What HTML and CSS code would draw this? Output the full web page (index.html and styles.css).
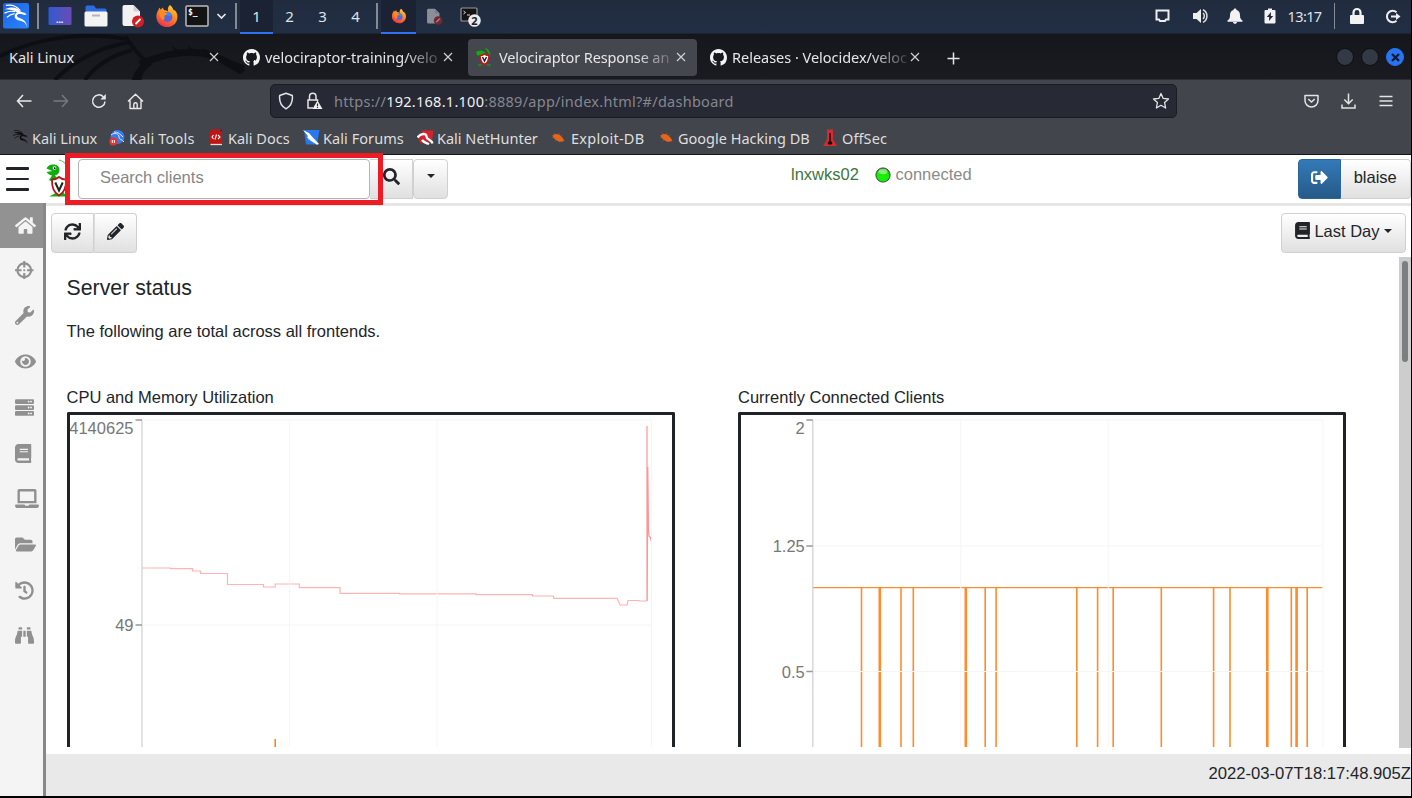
FILE: index.html
```html
<!DOCTYPE html>
<html lang="en">
<head>
<meta charset="utf-8">
<title>Velociraptor Response and Monitoring</title>
<link rel="stylesheet" href="styles.css">
</head>
<body>
<svg class="defs" width="0" height="0">
  <defs>
    <linearGradient id="gKali" x1="0" y1="0" x2="1" y2="1"><stop offset="0" stop-color="#1a62e0"/><stop offset="1" stop-color="#2a86ff"/></linearGradient>
    <linearGradient id="gDesk" x1="0" y1="0" x2="1" y2="0"><stop offset="0" stop-color="#2f5bd0"/><stop offset="1" stop-color="#6c4bb4"/></linearGradient>
    <linearGradient id="gFox" x1="0.8" y1="0" x2="0.3" y2="1"><stop offset="0" stop-color="#ffd43a"/><stop offset="0.45" stop-color="#ff8a1e"/><stop offset="1" stop-color="#ee2f4e"/></linearGradient>
    <radialGradient id="gDot" cx="0.45" cy="0.7" r="0.7"><stop offset="0" stop-color="#12f500"/><stop offset="0.7" stop-color="#18ea04"/><stop offset="1" stop-color="#1a7d10"/></radialGradient>
    <symbol id="firefox" viewBox="0 0 24 24">
      <path fill="url(#gFox)" d="M15 1c2 1.500 3 3.500 3.600 5.200 1-.200 1.600.300 2.200 1.300 1.400 2 2 4.500 1.500 7.200C21.300 19.900 17.200 23 12.200 23 6.300 23 1.600 18.600 1.400 12.900c-.100-3.500 1-5.600 2.200-7.200.100-.900.500-1.500 1-2 .300.800.700 1.500 1.300 2 .500-1 1.200-1.700 2.100-2.200 0 1 .300 1.800 1 2.400 1.800.100 3.200.600 4.100 1.500C12.500 5 13 2.600 15 1z"/>
      <circle cx="12.300" cy="13" r="5" fill="#5a62dc"/>
      <path fill="#3b8cf5" d="M9 9c2-1.500 5-1 6.500.500l1 3-4-1z"/>
      <path fill="#ff8b20" d="M4.500 7.500c2-.800 4-.300 5.400 1l2.400.700c-.300 1.500-1.500 1.800-2.900 2.300 0 1.300.5 2.400-.600 4.500-3-.5-5-4.500-4.300-8.500z"/>
    </symbol>
    <symbol id="docno" viewBox="0 0 24 24">
      <path fill="#f2f2f2" d="M1.500 3a2 2 0 0 1 2-2h9L19 7.500V20a2 2 0 0 1-2 2H3.500a2 2 0 0 1-2-2z"/>
      <path fill="#cfcfcf" d="M12.500 1v5a1.500 1.500 0 0 0 1.500 1.500h5z"/>
      <circle cx="17" cy="17.500" r="6" fill="#cf1f24"/>
      <path d="M14.500 20l5-5" stroke="#fff" stroke-width="1.800"/>
    </symbol>
    <symbol id="kdragon" viewBox="0 0 27 27">
      <path fill="currentColor" d="M2 6.500C8 3.500 15 4 18.500 9l4.500 1.500 1.500 2-3-.3-2.500-.7c-2.500-.5-4.500 0-4.500 1.800 0 3.200 9.500 1.500 10.500 11.500-2-6.500-6-6-9.500-7-4-1.200-4.500-6-1-8C11 7.200 6.500 6.500 2 6.500z"/>
      <path fill="none" stroke="currentColor" stroke-width="1.200" d="M3 2.500C8 1.500 14 3 18 8M1.500 10.500c4-2 7-2.500 11-1.500M4 15c2.500-2.500 5-3.700 8-4"/>
    </symbol>
    <symbol id="github" viewBox="0 0 16 16"><path fill="#f4f4f4" d="M8 0C3.580 0 0 3.580 0 8c0 3.540 2.290 6.530 5.470 7.590.4.070.55-.17.55-.38 0-.19-.01-.82-.01-1.490-2.010.37-2.530-.49-2.690-.94-.09-.23-.48-.94-.82-1.130-.28-.15-.68-.52-.01-.53.63-.01 1.080.58 1.230.82.72 1.210 1.870.87 2.330.66.07-.52.28-.87.51-1.070-1.780-.2-3.640-.89-3.640-3.950 0-.87.31-1.590.82-2.150-.08-.2-.36-1.020.08-2.120 0 0 .67-.21 2.200.82.64-.18 1.320-.27 2-.27s1.360.09 2 .27c1.530-1.040 2.200-.82 2.200-.82.44 1.100.16 1.920.08 2.120.51.56.82 1.270.82 2.150 0 3.070-1.870 3.750-3.650 3.950.29.25.54.73.54 1.480 0 1.070-.01 1.930-.01 2.200 0 .21.15.46.55.38A8.010 8.010 0 0 0 16 8c0-4.420-3.580-8-8-8z"/></symbol>
    <symbol id="close" viewBox="0 0 10 10"><path d="M1 1l8 8M9 1L1 9" stroke="#d0d0d0" stroke-width="1.200"/></symbol>
    <symbol id="raptor" viewBox="0 0 24 40">
      <path fill="none" stroke="#4fca4f" stroke-width="1.200" d="M13 1c5 1 9 5 8.500 12-.300 3-1 4-2.500 6"/>
      <path fill="#0fae0f" d="M.500 9.500C2 6.500 4.500 5 7.500 5.500c3.500 0 6 2.200 6 5.500 0 3-1.700 4.500-4.500 5.500l3 4-6 2-3-1.500 3-4.500C3.500 16 1.500 15 .700 13l5.500-1z"/>
      <path fill="#0fae0f" d="M3 37.500l6-3 2-4h5l2 4 5 3z"/>
      <circle cx="8.500" cy="9" r="1.800" fill="#fff"/><circle cx="8.700" cy="9.200" r=".9" fill="#000"/>
      <path fill="#fff" stroke="#b81414" stroke-width="1.800" d="M13 18c-2 1.800-4.500 2.600-7 2.600-.300 7 1 12.400 7 16 6-3.600 7.300-9 7-16-2.500 0-5-.800-7-2.600z"/>
      <path fill="none" stroke="#222" stroke-width="2" d="M9.300 23.500L13 31.500l3.700-8"/>
    </symbol>
    <symbol id="book" viewBox="0 0 448 512"><path d="M448 360V24c0-13.300-10.700-24-24-24H96C43 0 0 43 0 96v320c0 53 43 96 96 96h328c13.300 0 24-10.700 24-24v-16c0-7.500-3.500-14.300-8.900-18.700-4.200-15.400-4.200-59.300 0-74.700 5.400-4.300 8.900-11.100 8.900-18.600zM128 134c0-3.300 2.700-6 6-6h212c3.300 0 6 2.700 6 6v20c0 3.300-2.700 6-6 6H134c-3.300 0-6-2.700-6-6v-20zm0 64c0-3.300 2.700-6 6-6h212c3.300 0 6 2.700 6 6v20c0 3.300-2.700 6-6 6H134c-3.300 0-6-2.700-6-6v-20zm253.400 250H96c-17.700 0-32-14.300-32-32 0-17.600 14.400-32 32-32h285.400c-1.900 17.100-1.900 46.900 0 64z"/></symbol>
    <symbol id="spider" viewBox="0 0 16 16"><path fill="#e8641b" d="M1.500 6C4 3.500 7 4 9.500 5.500c2.500 1.500 3.500 3.500 4.800 6-2.800 1.500-5.800 1.500-8.300-.5C4 9.500 3 8.500 1.500 6z"/><path d="M3.500 3l2 3M1 8l4 .5M4 11.500l3-2M9 13v-3M8.500 3v3M12 5l-2 2" stroke="#e8641b" stroke-width=".7" opacity=".6"/></symbol>
  </defs>
</svg>

<div class="screen">
  <div class="panel">
    <div class="panel-left">
      <div class="slot w-logo"><svg width="28" height="28" viewBox="0 0 28 28"><rect x="1" y="1" width="26" height="25.500" rx="2" fill="url(#gKali)"/><g color="#fff"><use href="#kdragon" width="26" height="26" x="1" y="1"/></g></svg></div>
      <i class="sep"></i>
      <div class="slot w-desk"><svg width="24" height="20" viewBox="0 0 24 20"><rect x=".5" y="1" width="23" height="18" rx="1" fill="url(#gDesk)"/><path d="M8.500 16.300h7" stroke="#dde" stroke-width="1.500" stroke-dasharray="1.800 .6"/></svg></div>
      <div class="slot w-folder"><svg width="24" height="22" viewBox="0 0 24 22"><path fill="#2f6be0" d="M1.500 7V2a1.500 1.500 0 0 1 1.500-1.500h7l2 3h9A1.500 1.500 0 0 1 22.500 5v4h-21z"/><rect x=".5" y="6.500" width="23" height="15" rx="1.500" fill="#f3f3f3"/><path d="M8 10.500h8" stroke="#b5b5b5" stroke-width="2"/></svg></div>
      <div class="slot w-doc"><svg width="24" height="24"><use href="#docno"/></svg></div>
      <div class="slot w-fox"><svg width="24" height="24"><use href="#firefox"/></svg></div>
      <div class="slot w-term"><svg width="24" height="22" viewBox="0 0 24 22"><rect x="1" y="1" width="22" height="20" rx="1" fill="#141414" stroke="#bcbcbc" stroke-width="1.500"/><text x="3" y="10" class="prompt">$_</text></svg></div>
      <div class="slot w-chev"><svg width="11" height="7" viewBox="0 0 11 7"><path d="M1.500 1l4 4 4-4" fill="none" stroke="#e8e8e8" stroke-width="1.700"/></svg></div>
      <i class="sep"></i>
      <div class="ws on">1</div><div class="ws">2</div><div class="ws">3</div><div class="ws">4</div>
      <i class="sep sep-ws"></i>
      <div class="win on"><svg width="16" height="16"><use href="#firefox"/></svg></div>
      <div class="win dim"><svg width="17" height="17"><use href="#docno"/></svg></div>
      <div class="win last"><svg width="23" height="22" viewBox="0 0 23 22"><rect x="1" y="3" width="16" height="13" rx="1" fill="#141414" stroke="#999" stroke-width="1.200"/><path d="M3.500 6l2 1.500-2 1.500M7 10h3" stroke="#ddd" stroke-width="1" fill="none"/><circle cx="14.500" cy="15.500" r="6.300" fill="#ececec"/><text x="11.300" y="19.700" class="badge-num">2</text></svg></div>
    </div>
    <div class="panel-right">
      <div class="tray t1"><svg width="16" height="14" viewBox="0 0 16 14"><path d="M1.500 1.500h12v9h-2.500l-1 1.500h-5l-1-1.500h-2.500z" fill="none" stroke="#eee" stroke-width="2"/></svg></div>
      <div class="tray t2"><svg width="18" height="16" viewBox="0 0 18 16"><path fill="#eee" d="M1 5h3.500L9 1v14l-4.500-4H1z"/><path d="M11 5a4 4 0 0 1 0 6M11 1.700a7 7 0 0 1 0 12.600" fill="none" stroke="#ddd" stroke-width="1.500"/></svg></div>
      <div class="tray t3"><svg width="16" height="16" viewBox="0 0 16 16"><path fill="#f2f2f2" d="M8 .5c1 0 1.500.7 1.500 1.500 2.600.7 3.500 2.800 3.500 5.500 0 3 1 4 2.500 5v1.200H.5v-1.200C2 11.500 3 10.500 3 7.500 3 4.800 3.900 2.700 6.500 2 6.500 1.200 7 .5 8 .5zM6 14h4c0 1.100-.9 1.800-2 1.800S6 15.100 6 14z"/></svg></div>
      <div class="tray t4"><svg width="12" height="16" viewBox="0 0 12 16"><path fill="#f2f2f2" d="M4 .5h4V2h2.500a1 1 0 0 1 1 1v11.500a1 1 0 0 1-1 1h-9a1 1 0 0 1-1-1V3a1 1 0 0 1 1-1H4z"/><path fill="#1f2a3c" d="M7 4L2.800 9h2.400L5 13l4.200-5H6.800z"/></svg></div>
      <div class="clock">13:17</div>
      <i class="sep sep-r"></i>
      <div class="tray t5"><svg width="16" height="18" viewBox="0 0 16 18"><rect x="1" y="8" width="14" height="9" rx="1" fill="#f2f2f2"/><path d="M4.500 9V5.500a3.500 3.500 0 0 1 7 0V9" fill="none" stroke="#f2f2f2" stroke-width="2.200"/></svg></div>
      <div class="tray t6"><svg width="17" height="15" viewBox="0 0 17 15"><path d="M11.500 3.300A5.700 5.700 0 1 0 11.500 11.700" fill="none" stroke="#eee" stroke-width="2"/><path fill="#eee" d="M6 6.600h5V4l4.500 3.500L11 11V8.400H6z"/></svg></div>
    </div>
  </div>

  <div class="tabs">
    <svg class="wall" width="250" height="46" viewBox="0 0 250 46"><path fill="none" stroke="#0c0d11" stroke-width="4" d="M0 22C40 2 90-2 125 5M55 46C70 30 95 14 130 8M85 46c10-14 25-24 47-30M125 2c8 12 14 20 22 26-10 8-12 14-14 20"/><path fill="none" stroke="#0c0d11" stroke-width="7" d="M140 30c20-8 40-14 62-11 14 2 24 10 42 16M150 28c-8 6-12 10-12 20"/><path fill="#0c0d11" d="M172 12l12 8h-8zM188 12l12 8h-10zM203 14l14 8h-10zM222 30l24 6-6 4z"/></svg>
    <div class="tab first"><span class="tab-text">Kali Linux</span><svg class="x" width="10" height="10"><use href="#close"/></svg></div>
    <div class="tab"><svg class="fav" width="17" height="17"><use href="#github"/></svg><span class="tab-text fade">velociraptor-training/velo</span><svg class="x" width="10" height="10"><use href="#close"/></svg></div>
    <div class="tab active"><svg class="fav" width="17" height="18" viewBox="0 0 17 18"><path fill="#0fae0f" d="M0 4c3-2 6-2 9 0l1 3-4 2-5-2zM9 0c4 1 6 5 5 9l-1-3z"/><path fill="#fff" stroke="#c01818" stroke-width="1.600" d="M8.500 6c-1.500 1-3 1.500-4.500 1.500 0 4 1 7 4.500 9 3.500-2 4.500-5 4.500-9C11.500 7.500 10 7 8.500 6z"/><path d="M6.500 9l2 4 2-4" fill="none" stroke="#222" stroke-width="1.500"/><path d="M2 17h4M11 17h4" stroke="#0fae0f"/></svg><span class="tab-text fade">Velociraptor Response an</span><svg class="x" width="10" height="10"><use href="#close"/></svg></div>
    <div class="tab rel"><svg class="fav" width="17" height="17"><use href="#github"/></svg><span class="tab-text fade">Releases · Velocidex/veloc</span><svg class="x" width="10" height="10"><use href="#close"/></svg></div>
    <svg class="plus" width="13" height="13" viewBox="0 0 13 13"><path d="M6.500.5v12M.5 6.500h12" stroke="#e6e6e6" stroke-width="1.500"/></svg>
    <div class="winctl"><i></i><i></i><b><svg width="9" height="9" viewBox="0 0 9 9"><path d="M1 1l7 7M8 1L1 8" stroke="#111a2c" stroke-width="2.300"/></svg></b></div>
  </div>

  <div class="nav">
    <svg class="n-back" width="16" height="14" viewBox="0 0 16 14"><path d="M7 1L1.500 7 7 13M1.500 7H15.500" fill="none" stroke="#e9e9e9" stroke-width="1.500"/></svg>
    <svg class="n-fwd" width="16" height="14" viewBox="0 0 16 14"><path d="M9 1l5.500 6L9 13M14.500 7H.5" fill="none" stroke="#77797f" stroke-width="1.500"/></svg>
    <svg class="n-rel" width="16" height="16" viewBox="0 0 16 16"><path d="M14 8.500A6.200 6.200 0 1 1 12.300 3.800" fill="none" stroke="#e9e9e9" stroke-width="1.500"/><path d="M14.800 1v5.500H9.300z" fill="#e9e9e9"/></svg>
    <svg class="n-home" width="17" height="17" viewBox="0 0 17 17"><path d="M1 8.500L8.500 1.200 16 8.500M3 7v8.500h11V7M6.800 15.500v-4a1.700 1.700 0 0 1 3.400 0v4" fill="none" stroke="#e9e9e9" stroke-width="1.400" stroke-linejoin="round"/></svg>
    <div class="url">
      <svg width="16" height="18" viewBox="0 0 16 18"><path d="M8 1.200l6.300 2.300c.7 6-1.300 10.500-6.300 13.300C3 14 1 9.500 1.700 3.500z" fill="none" stroke="#e4e4e4" stroke-width="1.500" stroke-linejoin="round"/></svg>
      <svg class="lock" width="17" height="18" viewBox="0 0 17 18"><path d="M3.500 8V4.500a3 3 0 0 1 6.500 0V8M7 16H2V8h9.500v1" fill="none" stroke="#e4e4e4" stroke-width="1.500"/><path fill="#f2f2f2" d="M11.500 8.500L16.500 17h-10z"/><path d="M11.500 11.500v2.700M11.500 15v1" stroke="#272935" stroke-width="1.200"/></svg>
      <span class="url-text">https://<em>192.168.1.100</em>:8889/app/index.html?#/dashboard</span>
      <svg class="star" width="18" height="18" viewBox="0 0 18 18"><path d="M9 1.500l2.200 4.900 5.300.6-3.900 3.600 1 5.400L9 13.300 4.400 16l1-5.400L1.500 7l5.300-.6z" fill="none" stroke="#e4e4e4" stroke-width="1.300" stroke-linejoin="round"/></svg>
    </div>
    <svg class="n-pocket" width="15" height="14" viewBox="0 0 15 14"><path d="M1 1.500h13v5a6.500 6.500 0 0 1-13 0z" fill="none" stroke="#e4e4e4" stroke-width="1.500" stroke-linejoin="round"/><path d="M4.300 5l3.200 3 3.200-3" fill="none" stroke="#e4e4e4" stroke-width="1.500"/></svg>
    <svg class="n-dl" width="15" height="16" viewBox="0 0 15 16"><path d="M7.500.5v10M3.300 6.500l4.200 4.200 4.200-4.200M1 11.500V15h13v-3.500" fill="none" stroke="#e4e4e4" stroke-width="1.500"/></svg>
    <svg class="n-menu" width="14" height="12" viewBox="0 0 14 12"><path d="M.5 1.500h13M.5 6h13M.5 10.500h13" stroke="#e4e4e4" stroke-width="1.500"/></svg>
  </div>

  <div class="marks">
    <div class="mark m1"><svg width="17" height="17" color="#0d0d0f"><use href="#kdragon"/></svg>Kali Linux</div>
    <div class="mark m2"><svg width="17" height="17" viewBox="0 0 17 17"><circle cx="8.500" cy="8" r="7" fill="#367bf0"/><path d="M2 6c4-3 8-1 8 2s3 2 5 5M5 3c4 0 6 2 9 5" stroke="#dfe9ff" fill="none" stroke-width="1"/><circle cx="4.300" cy="12.500" r="4" fill="#e8332c"/><path d="M3.300 11v3M5.300 11v3" stroke="#fff"/></svg>Kali Tools</div>
    <div class="mark m3"><svg width="14" height="17" viewBox="0 0 14 17"><path fill="#c31414" d="M1 2.500L3 .5h10v15H1z"/><path fill="#19306b" d="M11.500.5H13v2h-1.500z"/><path d="M1.500 15.500H13" stroke="#ddd" stroke-width="1.300"/><path d="M4.500 6L3 8l1.500 2M9 6l2 2-2 2M7.500 5.500l-1.500 5" fill="none" stroke="#fff" stroke-width="1.100"/></svg>Kali Docs</div>
    <div class="mark m4"><svg width="17" height="17" viewBox="0 0 17 17"><path fill="#2878ee" d="M1 1h15.500L14 15.500H3z"/><path fill="#fff" d="M0 1l6 3 2.500 3L16 15l-2 .8L5 10 4.500 6.500z"/><path d="M4 8l4 4" stroke="#bcd" stroke-width="1"/></svg>Kali Forums</div>
    <div class="mark m5"><svg width="17" height="17" viewBox="0 0 17 17"><path fill="#d8202b" d="M4 1.500h12.500L14.500 14l-5-2-6 2.500L1 9l5-3z"/><path fill="none" stroke="#fff" stroke-width="2.300" d="M.5 8.500C4 4 9.500 4 9.500 7.500S14 10 15.500 14.500M5 11c2 3 5 3 7 4"/></svg>Kali NetHunter</div>
    <div class="mark m6"><svg width="15" height="15"><use href="#spider"/></svg>Exploit-DB</div>
    <div class="mark m7"><svg width="15" height="15"><use href="#spider"/></svg>Google Hacking DB</div>
    <div class="mark m8"><svg width="14" height="18" viewBox="0 0 14 18"><path fill="#d62a2d" d="M4 .5h6v10l4 6.500H0l4-6.500z"/><path fill="#16070a" d="M6.300 4h1.400v7.500l1.800 2.500-1 1.500h-3l-1-1.500 1.800-2.500z"/></svg>OffSec</div>
  </div>

  <div class="app">
    <header class="top">
      <div class="burger"><i></i><i></i><i></i></div>
      <svg class="brand" width="24" height="40"><use href="#raptor"/></svg>
      <div class="search">
        <div class="field">Search clients</div>
        <div class="btn go"><svg width="17" height="17" viewBox="0 0 512 512"><path d="M505 442.700L405.300 343c-4.500-4.500-10.600-7-17-7H372c27.600-35.300 44-79.700 44-128C416 93.100 322.900 0 208 0S0 93.100 0 208s93.100 208 208 208c48.300 0 92.700-16.400 128-44v16.300c0 6.400 2.500 12.500 7 17l99.700 99.700c9.400 9.400 24.600 9.400 33.900 0l28.300-28.300c9.400-9.400 9.400-24.600.1-34zM208 336c-70.700 0-128-57.200-128-128 0-70.700 57.200-128 128-128 70.700 0 128 57.200 128 128 0 70.700-57.200 128-128 128z"/></svg></div>
        <div class="btn drop"><i class="caret"></i></div>
      </div>
      <div class="client"><a>lnxwks02</a><svg width="16" height="16" viewBox="0 0 16 16"><circle cx="8" cy="8" r="7.100" fill="url(#gDot)" stroke="#3b4a3b" stroke-width="1"/><ellipse cx="8" cy="4.500" rx="4.500" ry="2.800" fill="#fff" opacity=".45"/></svg><span>connected</span></div>
      <div class="user">
        <div class="btn out"><svg width="17" height="17" viewBox="0 0 512 512"><path d="M497 273L329 441c-15 15-41 4.500-41-17v-96H152c-13.300 0-24-10.700-24-24v-96c0-13.300 10.700-24 24-24h136V88c0-21.400 25.900-32 41-17l168 168c9.300 9.400 9.300 24.600 0 34zM192 436v-40c0-6.600-5.400-12-12-12H96c-17.700 0-32-14.300-32-32V160c0-17.700 14.300-32 32-32h84c6.600 0 12-5.400 12-12V76c0-6.600-5.400-12-12-12H96c-53 0-96 43-96 96v192c0 53 43 96 96 96h84c6.600 0 12-5.400 12-12z"/></svg></div>
        <div class="btn name">blaise</div>
      </div>
      <div class="highlight"></div>
    </header>

    <div class="body">
      <nav class="side">
        <div class="item sel"><svg width="21" height="19" viewBox="0 0 576 512"><path d="M280.370 148.260L96 300.110V464a16 16 0 0 0 16 16l112.060-.29a16 16 0 0 0 15.920-16V368a16 16 0 0 1 16-16h64a16 16 0 0 1 16 16v95.640a16 16 0 0 0 16 16.050L464 480a16 16 0 0 0 16-16V300L295.670 148.260a12.190 12.190 0 0 0-15.300 0zM571.600 251.470L488 182.560V44.050a12 12 0 0 0-12-12h-56a12 12 0 0 0-12 12v72.610L318.470 43a48 48 0 0 0-61 0L4.340 251.470a12 12 0 0 0-1.600 16.900l25.500 31A12 12 0 0 0 45.150 301l235.220-193.740a12.190 12.190 0 0 1 15.300 0L530.900 301a12 12 0 0 0 16.900-1.600l25.500-31a12 12 0 0 0-1.700-16.930z"/></svg></div>
        <div class="item"><svg width="18.500" height="18.500" viewBox="0 0 512 512"><g fill="none" stroke="#909090" stroke-width="58"><circle cx="256" cy="256" r="190"/><path d="M256 0v180M256 332v180M0 256h180M332 256h180"/></g><circle cx="256" cy="256" r="30"/></svg></div>
        <div class="item"><svg width="19" height="19" viewBox="0 0 512 512"><path d="M507.730 109.100c-2.240-9.030-13.540-12.090-20.120-5.510l-74.360 74.360-67.880-11.310-11.310-67.880 74.360-74.360c6.620-6.620 3.430-17.900-5.660-20.160-47.380-11.740-99.550.91-136.580 37.930-39.640 39.640-50.550 97.100-34.050 147.200L18.740 402.760c-24.990 24.990-24.990 65.510 0 90.500 24.990 24.990 65.510 24.990 90.500 0l213.210-213.210c50.120 16.710 107.470 5.680 147.370-34.220 37.070-37.070 49.700-89.320 37.910-136.730zM64 472c-13.250 0-24-10.750-24-24 0-13.260 10.750-24 24-24s24 10.740 24 24c0 13.250-10.750 24-24 24z"/></svg></div>
        <div class="item"><svg width="21" height="19" viewBox="0 0 576 512"><path d="M572.520 241.400C518.290 135.590 410.930 64 288 64S57.680 135.640 3.480 241.410a32.350 32.350 0 0 0 0 29.190C57.710 376.410 165.070 448 288 448s230.320-71.640 284.520-177.410a32.350 32.350 0 0 0 0-29.190zM288 400a144 144 0 1 1 144-144 143.930 143.930 0 0 1-144 144zm0-240a95.310 95.310 0 0 0-25.310 3.790 47.850 47.850 0 0 1-66.900 66.900A95.780 95.780 0 1 0 288 160z"/></svg></div>
        <div class="item"><svg width="19" height="19" viewBox="0 0 512 512"><rect y="32" width="512" height="128" rx="32"/><rect y="192" width="512" height="128" rx="32"/><rect y="352" width="512" height="128" rx="32"/><g fill="#f4f4f4"><circle cx="368" cy="96" r="24"/><circle cx="432" cy="96" r="24"/><circle cx="368" cy="256" r="24"/><circle cx="432" cy="256" r="24"/><circle cx="368" cy="416" r="24"/><circle cx="432" cy="416" r="24"/></g></svg></div>
        <div class="item"><svg width="16.500" height="19"><use href="#book"/></svg></div>
        <div class="item"><svg width="24" height="19" viewBox="0 0 640 512"><path d="M624 416H381.540c-.74 19.810-14.710 32-32.740 32H288c-18.690 0-33.020-17.470-32.770-32H16c-8.800 0-16 7.200-16 16v16c0 35.200 28.800 64 64 64h512c35.200 0 64-28.800 64-64v-16c0-8.800-7.200-16-16-16zM576 48c0-26.400-21.600-48-48-48H112C85.600 0 64 21.600 64 48v336h512V48zm-64 272H128V64h384v256z"/></svg></div>
        <div class="item"><svg width="21" height="19" viewBox="0 0 576 512"><path d="M572.694 292.093L500.270 416.248A63.997 63.997 0 0 1 444.989 448H45.025c-18.523 0-30.064-20.093-20.731-36.093l72.424-124.155A64 64 0 0 1 152 256h399.964c18.523 0 30.064 20.093 20.730 36.093zM152 224h328v-48c0-26.510-21.490-48-48-48H272l-64-64H48C21.490 64 0 85.490 0 112v278.046l69.077-118.418C86.214 242.250 117.989 224 152 224z"/></svg></div>
        <div class="item"><svg width="19" height="19" viewBox="0 0 512 512"><path d="M504 255.531c.253 136.640-111.180 248.372-247.820 248.468-59.015.042-113.223-20.530-155.822-54.911-11.077-8.940-11.905-25.541-1.839-35.607l11.267-11.267c8.609-8.609 22.353-9.551 31.891-1.984C173.062 425.135 212.781 440 256 440c101.705 0 184-82.311 184-184 0-101.705-82.311-184-184-184-48.814 0-93.149 18.969-126.068 49.932l50.754 50.754c10.080 10.080 2.941 27.314-11.313 27.314H24c-8.837 0-16-7.163-16-16V38.627c0-14.254 17.234-21.393 27.314-11.314l49.372 49.372C129.209 34.136 189.552 8 256 8c136.810 0 247.747 110.780 248 247.531zm-180.912 78.784l9.823-12.630c8.138-10.463 6.253-25.542-4.210-33.679L288 256.349V152c0-13.255-10.745-24-24-24h-16c-13.255 0-24 10.745-24 24v135.651l65.409 50.874c10.463 8.137 25.541 6.253 33.679-4.210z"/></svg></div>
        <div class="item"><svg width="19" height="19" viewBox="0 0 512 512"><path d="M416 48c0-8.840-7.160-16-16-16h-64c-8.840 0-16 7.160-16 16v48h96V48zM63.910 159.990C61.400 253.840 3.460 274.220 0 404v44c0 17.670 14.330 32 32 32h96c17.670 0 32-14.330 32-32V288h32V128H95.840c-17.630 0-31.450 14.370-31.930 31.990zm384.180 0c-.48-17.620-14.300-31.990-31.930-31.990H320v160h32v160c0 17.670 14.330 32 32 32h96c17.670 0 32-14.330 32-32v-44c-3.460-129.780-61.400-150.160-63.910-244.010zM176 32h-64c-8.840 0-16 7.160-16 16v48h96V48c0-8.840-7.160-16-16-16zm48 256h64V128h-64v160z"/></svg></div>
      </nav>
      <main class="main">
        <div class="tools">
          <div class="group">
            <div class="btn sync"><svg width="17" height="17" viewBox="0 0 512 512"><path d="M440.650 12.570l4 82.770A247.160 247.160 0 0 0 255.830 8C134.730 8 33.910 94.920 12.290 209.820A12 12 0 0 0 24.090 224h49.050a12 12 0 0 0 11.670-9.260 175.910 175.910 0 0 1 317-56.940l-101.460-4.860a12 12 0 0 0-12.570 12v47.410a12 12 0 0 0 12 12H500a12 12 0 0 0 12-12V12a12 12 0 0 0-12-12h-47.370a12 12 0 0 0-11.980 12.570zM255.830 432a175.610 175.610 0 0 1-146-77.800l101.800 4.870a12 12 0 0 0 12.570-12v-47.400a12 12 0 0 0-12-12H12a12 12 0 0 0-12 12V500a12 12 0 0 0 12 12h47.350a12 12 0 0 0 12-12.600l-4.150-82.570A247.170 247.170 0 0 0 255.830 504c121.110 0 221.930-86.920 243.550-201.820a12 12 0 0 0-11.800-14.180h-49.050a12 12 0 0 0-11.670 9.260A175.860 175.860 0 0 1 255.830 432z"/></svg></div>
            <div class="btn edit"><svg width="17" height="17" viewBox="0 0 512 512"><path d="M497.900 142.100l-46.100 46.100c-4.700 4.700-12.300 4.700-17 0l-111-111c-4.700-4.700-4.700-12.300 0-17l46.100-46.100c18.700-18.700 49.100-18.700 67.900 0l60.100 60.100c18.800 18.700 18.800 49.100 0 67.900zM284.200 99.800L21.600 362.400.4 483.900c-2.900 16.400 11.400 30.600 27.800 27.800l121.500-21.300 262.600-262.600c4.700-4.700 4.700-12.300 0-17l-111-111c-4.800-4.700-12.400-4.700-17.100 0zM124.100 339.900c-5.500-5.500-5.500-14.300 0-19.800l154-154c5.500-5.500 14.300-5.500 19.800 0s5.500 14.300 0 19.800l-154 154c-5.500 5.500-14.300 5.500-19.800 0zM88 424h48v36.300l-64.500 11.300-31.100-31.100L51.700 376H88v48z"/></svg></div>
          </div>
          <div class="btn range"><svg width="15" height="17"><use href="#book"/></svg><span>Last Day</span><i class="caret"></i></div>
        </div>
        <div class="scroll">
          <div class="dash">
            <h4>Server status</h4>
            <p>The following are total across all frontends.</p>
            <div class="charts">
              <section class="card">
                <h5>CPU and Memory Utilization</h5>
                <div class="chart"><svg width="602" height="332" viewBox="69.5 416 602 332">
                  <g class="axis"><path d="M141.500 421V748"/></g>
                  <g class="ticks"><path d="M135 421h6.500M135 626h6.500"/></g>
                  <path class="mem" d="M142 569H170V569.700H192V572H200V574.500H227V585.500H263V588H274.700V585H298.800V588.700H339.600V594.400H399V594.800H475.500V595.700H532V597H553V599.400H616.500L619.600 606H626.500L627.500 601.500H638.500V602H646.300"/>
                  <path class="peak" d="M646.500 602V427M646.700 468V602L647.300 468 648 530 648.500 537 650 538.500 651 543"/>
                  <path class="cpu2" d="M274.700 740V748"/>
                  <g class="grid"><path d="M142 421H651M142 626H651M289 421V748M436.500 421V748M651 421V748"/></g>
                  <text x="133" y="434.500">4140625</text><text x="133" y="631.500">49</text>
                </svg></div>
              </section>
              <section class="card">
                <h5>Currently Connected Clients</h5>
                <div class="chart"><svg width="602" height="332" viewBox="741.200 416 602 332">
                  <g class="axis"><path d="M813 421V748"/></g>
                  <g class="ticks"><path d="M806.500 421h6.500M806.500 547h6.500M806.500 672.500h6.500"/></g>
                  <path class="conn" d="M813.500 588.700H1323"/>
                  <path class="conn v" d="M861.700 588V748M901.200 588V748M913.500 588V748M985.400 588V748M996.300 588V748M1077 588V748M1097.800 588V748M1113.400 588V748M1161.500 588V748M1213.800 588V748M1230.200 588V748M1291.500 588V748M1307.400 588V748"/>
                  <path class="conn w" d="M880 588V748M1267.500 588V748M966 588V748M1296.800 588V748"/>
                  <g class="grid"><path d="M814 421H1323M814 547H1323M814 672.500H1323M961 421V748M1108.500 421V748M1323 421V748"/></g>
                  <text x="805" y="434.500">2</text><text x="805" y="552.500">1.25</text><text x="805" y="678.500">0.5</text>
                </svg></div>
              </section>
            </div>
          </div>
          <div class="bar"><i></i></div>
        </div>
        <footer class="foot">2022-03-07T18:17:48.905Z</footer>
      </main>
    </div>
  </div>
</div>
</body>
</html>
```

FILE: styles.css
```css
* { box-sizing: border-box; }
html, body { margin: 0; padding: 0; overflow: hidden; }
body { background: #000; width: 1412px; height: 798px; }
.defs { display: block; position: absolute; }
.screen { display: flex; flex-direction: column; width: 1411px; height: 798px; font-family: "Noto Sans", sans-serif; color: #e6e6e6; overflow: hidden; }
svg { display: block; flex: none; }
i, em, b { font-style: normal; font-weight: normal; }

/* desktop panel */
.panel { display: flex; justify-content: space-between; height: 34px; flex: none; background: linear-gradient(#212b3e, #212f44); border-bottom: 1px solid #1c2432; }
.panel-left, .panel-right { display: flex; align-items: center; height: 32px; }
.slot { display: flex; align-items: center; justify-content: flex-start; }
.sep { width: 2px; height: 26px; background: #858b94; flex: none; }
.w-logo { width: 37px; padding-left: 2px; }
.w-desk { width: 45px; padding-left: 9px; }
.w-folder { width: 37px; }
.w-doc { width: 34px; }
.w-fox { width: 30px; }
.w-term { width: 31px; }
.w-chev { width: 19px; }
.w-desk, .w-folder, .w-doc, .w-fox, .w-term, .w-chev { flex: none; }
.prompt { font: bold 8px "DejaVu Sans Mono", monospace; fill: #fff; }
.badge-num { font: bold 11px "Noto Sans", sans-serif; fill: #222; }
.ws { display: flex; align-items: center; justify-content: center; width: 33px; height: 32px; font-size: 15px; color: #dfe2e8; }
.ws.on { margin-left: 3px; }
.ws.on, .win.on { background: #1a2233; border-bottom: 2px solid #2d74f0; height: 34px; align-self: flex-start; }
.sep-ws { margin-left: 4px; margin-right: 3px; }
.win { display: flex; align-items: center; justify-content: center; width: 35px; height: 32px; }
.win.dim { width: 37px; opacity: .5; }
.win.last { width: 37px; }
.tray { display: flex; flex: none; }
.t1 { width: 37px; } .t2 { width: 35px; } .t3 { width: 37px; } .t4 { width: 24px; }
.t5 { width: 36px; } .t6 { width: 26px; }
.clock { width: 46px; font-size: 14.500px; letter-spacing: -0.6px; color: #dfe2e8; }
.sep-r { margin-right: 14px; width: 1.500px; }

/* browser tabs */
.tabs { position: relative; display: flex; align-items: flex-start; gap: 4px; height: 46px; flex: none; padding-top: 5px; background: linear-gradient(#15171c, #191b21); font-size: 14.500px; border-bottom: 1px solid #2b2d33; }
.wall { position: absolute; left: 0; top: 0; opacity: .8; }
.tab { position: relative; display: flex; align-items: center; width: 229px; height: 37px; padding: 0 11px 1px 8px; border-radius: 4px; }
.tab.first { width: 231px; padding-left: 9px; padding-right: 12px; }
.tab.active { background: #45474e; }
.tab.rel { padding-left: 9px; padding-right: 10px; }
.fav { margin-right: 5px; }
.active .fav { margin-right: 6px; }
.tab-text { flex: 1; white-space: nowrap; letter-spacing: -0.02px; }
.active .tab-text { letter-spacing: -0.12px; }
.fade { -webkit-mask-image: linear-gradient(90deg, #000 78%, transparent 102%); mask-image: linear-gradient(90deg, #000 78%, transparent 102%); }
.plus { margin: 13px 0 0 13px; }
.winctl { display: flex; gap: 7px; margin: 9px 7px 0 auto; }
.winctl i, .winctl b { display: flex; align-items: center; justify-content: center; width: 18px; height: 18px; border-radius: 50%; background: #333945; border: 1px solid #0c0e12; }
.winctl b { background: #2874f3; border-color: #2874f3; }

/* navigation bar */
.nav { display: flex; align-items: center; height: 42px; flex: none; padding-left: 16px; background: #43454c; }
.n-fwd { margin-left: 21px; }
.n-rel { margin-left: 22px; }
.n-home { margin-left: 20px; }
.url { display: flex; align-items: center; width: 907px; height: 34px; margin-left: 126px; padding: 0 6px 0 7px; border: 1px solid #1b1c22; border-radius: 5px; background: #272935; font-size: 14.500px; color: #85878f; }
.lock { margin-left: 12px; }
.url-text { flex: 1; margin-left: 11px; white-space: nowrap; letter-spacing: 0.27px; }
.url-text em { color: #f2f2f2; }
.n-pocket { margin-left: 127px; }
.n-dl { margin-left: 22px; }
.n-menu { margin-left: 23px; }

.marks { display: flex; align-items: center; height: 33px; flex: none; padding: 0 0 1px 12px; background: #43454c; border-bottom: 1px solid #15161a; font-size: 14.500px; color: #dedede; }
.mark { display: flex; align-items: center; gap: 3px; flex: none; white-space: nowrap; }
.m1 { width: 97px; } .m2 { width: 100px; letter-spacing: 0.2px; } .m3 { width: 94px; gap: 5px; } .m4 { width: 114px; letter-spacing: 0.06px; }
.m5 { width: 134px; } .m6 { width: 108px; gap: 5px; letter-spacing: 0.25px; } .m7 { width: 164px; gap: 4px; } .m8 { gap: 5px; letter-spacing: 0.1px; }

/* application */
.app { display: flex; flex-direction: column; height: 641px; flex: none; background: #fff; font-family: "Liberation Sans", Arial, sans-serif; font-size: 16.500px; color: #212529; }
.top { position: relative; display: flex; height: 48px; flex: none; padding: 4px 0 0 6px; }
.burger { display: flex; flex-direction: column; gap: 8px; width: 23px; margin-top: 8px; }
.burger i { height: 2.600px; background: #212529; border-radius: 1px; }
.brand { margin: 0 0 0 17px; }
.search { display: flex; height: 40px; margin-left: 8px; }
.field { width: 292px; padding: 8px 0 0 21px; line-height: 19px; color: #868686; border: 1px solid #b4b4b4; border-radius: 4px; background: #fff; }
.btn { display: flex; justify-content: center; height: 40px; border: 1px solid #d0d0d0; background: linear-gradient(#fff, #e0e0e0); line-height: 19px; }
.btn svg, .side svg { fill: currentColor; }
.go { width: 43px; padding-top: 8px; border-left: 0; }
.drop { width: 35px; padding-top: 14px; border-radius: 4px; }
.caret { width: 0; height: 0; border: 4px solid transparent; border-top: 4.500px solid #212529; border-bottom: 0; }
.client { display: flex; margin-left: 343px; padding-top: 6px; line-height: 19px; }
.client a { color: #3c763d; width: 83.500px; }
.client span { margin-left: 5px; color: #8b8b8b; }
.client svg { margin-top: 2px; }
.user { display: flex; margin-left: auto; }
.out { width: 43px; padding-top: 9px; color: #fff; background: linear-gradient(#337ab7, #265a88); border-color: #2b669a; border-radius: 4px 0 0 4px; }
.name { width: 70.500px; padding-top: 8px; border-left: 0; border-radius: 0 4px 4px 0; }
.highlight { position: absolute; left: 65px; top: -2px; width: 318px; height: 52px; border: 5px solid #ed1c24; z-index: 3; }

.body { display: flex; flex: 1; min-height: 0; }
.side { width: 46px; flex: none; background: #f4f4f4; border-right: 3px solid #888; color: #909090; }
.item { height: 45.700px; padding: 12.500px 0 0 15px; }
.item.sel { height: 45px; margin-bottom: .300px; background: #929292; color: #f4f4f4; }
.main { display: flex; flex-direction: column; flex: 1; min-width: 0; border-top: 3px solid #e5e5e5; }
.tools { display: flex; justify-content: space-between; height: 51px; flex: none; padding: 7px 5px 0 5px; }
.group { display: flex; }
.sync { width: 43px; padding-top: 9px; border-radius: 4px 0 0 4px; }
.edit { width: 43px; padding-top: 9px; border-left-color: #dcdcdc; border-radius: 0 4px 4px 0; }
.range { width: 125px; padding-top: 8px; border-radius: 4px; }
.range span { margin: 0 4px 0 4px; white-space: nowrap; }
.range .caret { margin-top: 6.500px; }
.range svg { margin-top: 0; }
.scroll { display: flex; height: 491px; flex: none; overflow: hidden; }
.dash { flex: 1; padding: 0 0 0 20.500px; }
.dash h4 { margin: 19px 0 0; font-size: 21.300px; font-weight: normal; line-height: 25px; }
.dash p { margin: 20px 0 0; line-height: 20px; }
.charts { display: flex; gap: 63.500px; margin-top: 46px; }
.card { width: 608px; flex: none; }
.card h5 { margin: 0; font-size: 16.500px; font-weight: normal; line-height: 20px; }
.chart { height: 335px; margin-top: 5px; border: 3px solid #1f2328; border-bottom: 0; border-radius: 2px 2px 0 0; }
.chart path { fill: none; }
.chart text { font: 16.500px "Liberation Sans", Arial, sans-serif; fill: #777; text-anchor: end; }
.axis path { stroke: #d8d8d8; stroke-width: 1.500; }
.ticks path { stroke: #999; stroke-width: 1.500; }
.grid path { stroke: #f5f5f5; stroke-width: 1; }
.mem { stroke: #ffb3b3; stroke-width: 1.200; }
.peak { stroke: #ff9494; stroke-width: 1.200; }
.cpu2 { stroke: #ff7f0e; stroke-width: 1.500; }
.conn { stroke: #ff8c2c; stroke-width: 1.200; }
.conn.v { stroke-width: 1.600; }
.conn.w { stroke-width: 2.600; }
.bar { width: 12px; flex: none; padding: 4px 3px 0; background: #cdcdcd; }
.bar i { display: block; height: 101px; border-radius: 3px; background: #7c7f80; }
.foot { display: flex; justify-content: flex-end; flex: 1; margin-top: 6px; padding-top: 10px; background: #e9e9e9; line-height: 19px; font-size: 16.650px; white-space: nowrap; }
```
